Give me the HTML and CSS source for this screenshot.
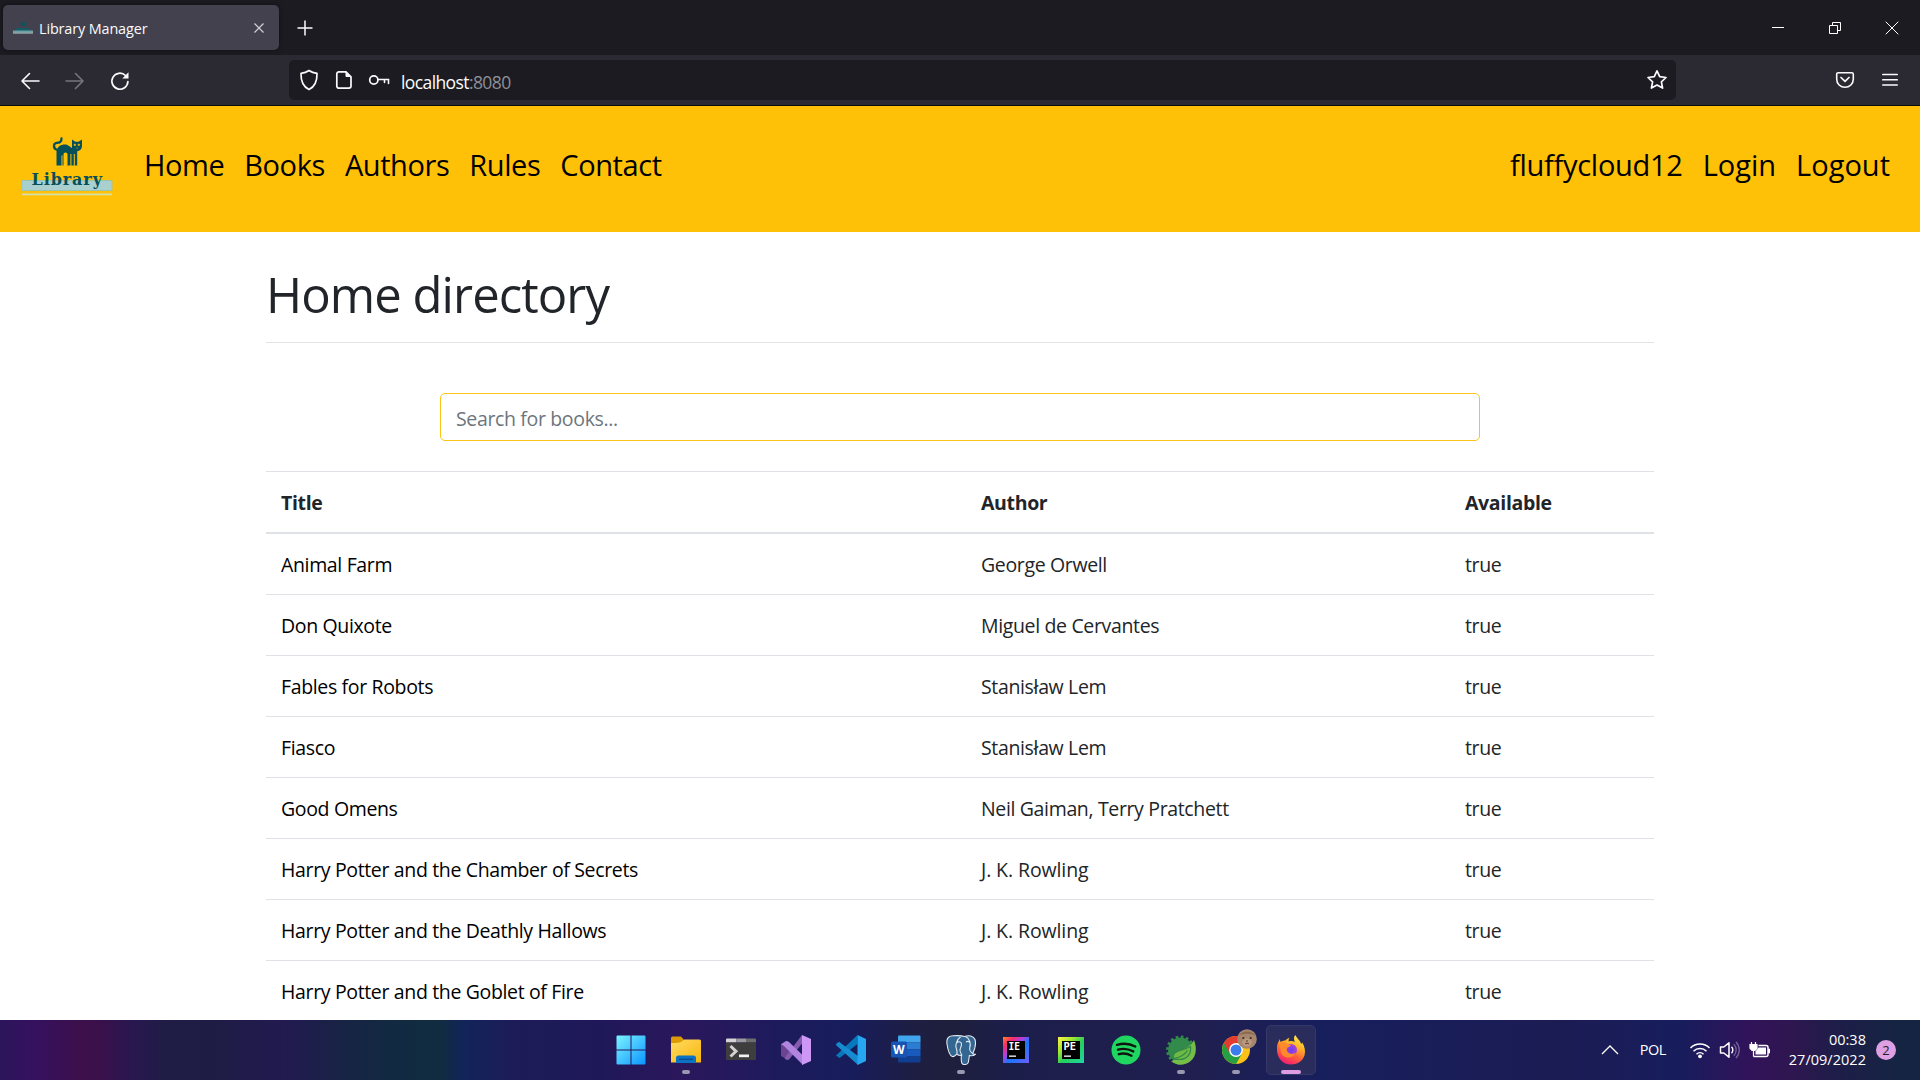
FILE: index.html
```html
<!DOCTYPE html>
<html lang="en">
<head>
<meta charset="utf-8">
<title>Library Manager</title>
<link rel="stylesheet" href="styles.css">
</head>
<body>
<div class="screen">
  <header class="tabstrip">
    <div class="tab">
      <svg class="favicon" width="20" height="14" viewBox="0 0 20 14"><path d="M7 1l2 1 2-1h2v4H8V3z" fill="#0b5560"/><path d="M3 7h14v3H3z" fill="#185862"/><path d="M0 9.500h20v2H0z" fill="#69a3a7"/><path d="M0 11.500h20v1H0z" fill="#b7d4d5"/></svg>
      <span class="tab-title">Library Manager</span>
      <svg class="tab-close" width="12" height="12" viewBox="0 0 12 12"><path d="M1.500 1.500l9 9m0-9l-9 9" stroke="#d0d0d6" stroke-width="1.200"/></svg>
    </div>
    <svg class="new-tab" width="16" height="16" viewBox="0 0 16 16"><path d="M8 .5v15M.5 8h15" stroke="#fbfbfe" stroke-width="1.500"/></svg>
    <div class="window-buttons">
      <svg width="14" height="14" viewBox="0 0 14 14"><path d="M1 6.500h12" stroke="#fff"/></svg>
      <svg width="14" height="14" viewBox="0 0 14 14"><path d="M1.500 4.500h8v8h-8zM4.500 4.500v-3h8v8h-3" fill="none" stroke="#fff"/></svg>
      <svg width="14" height="14" viewBox="0 0 14 14"><path d="M.7.7l12.600 12.600m0-12.600L.7 13.300" stroke="#fff"/></svg>
    </div>
  </header>

  <div class="toolbar">
    <div class="nav-buttons">
      <svg width="20" height="20" viewBox="0 0 20 20"><path d="M19 10H2M9.500 2.500L2 10l7.500 7.500" fill="none" stroke="#fbfbfe" stroke-width="1.600" stroke-linecap="round" stroke-linejoin="round"/></svg>
      <svg width="20" height="20" viewBox="0 0 20 20"><path d="M1 10h17M10.500 2.500L18 10l-7.500 7.500" fill="none" stroke="#76757d" stroke-width="1.600" stroke-linecap="round" stroke-linejoin="round"/></svg>
      <svg width="20" height="20" viewBox="0 0 20 20"><path d="M17.900 10.500A8 8 0 1 1 15.500 4.500" fill="none" stroke="#fbfbfe" stroke-width="1.700" stroke-linecap="round"/><path d="M18.500 1.200v6.300h-6.200z" fill="#fbfbfe"/></svg>
    </div>
    <div class="urlbar">
      <svg width="20" height="22" viewBox="0 0 20 22"><path d="M10 1.500c2.300 1.600 5 2.500 8 2.900C18.200 12 16 17.500 10 20.500 4 17.500 1.800 12 2 4.400c3-.4 5.700-1.300 8-2.900z" fill="none" stroke="#fbfbfe" stroke-width="1.700" stroke-linejoin="round"/></svg>
      <svg width="18" height="20" viewBox="0 0 18 20"><path d="M4 1.800h7l5 5V16a2.200 2.200 0 0 1-2.200 2.200H4A2.200 2.200 0 0 1 1.800 16V4A2.200 2.200 0 0 1 4 1.800z" fill="none" stroke="#fbfbfe" stroke-width="1.700"/><path d="M10.500 1.500v4.300c0 .8.500 1.300 1.300 1.300H16z" fill="#fbfbfe"/></svg>
      <svg class="key" width="22" height="12" viewBox="0 0 22 12"><circle cx="5.800" cy="6" r="4.100" fill="none" stroke="#fbfbfe" stroke-width="1.700"/><path d="M10 5.500h10.500v4M16.500 5.500v3" fill="none" stroke="#fbfbfe" stroke-width="1.600" stroke-linecap="round"/></svg>
      <span class="url">localhost<span class="port">:8080</span></span>
      <svg class="star" width="22" height="22" viewBox="0 0 22 22"><path d="M11 1.900l2.700 5.800 6.300.8-4.600 4.300 1.200 6.300L11 16l-5.600 3.100 1.200-6.300L2 8.500l6.300-.8z" fill="none" stroke="#fbfbfe" stroke-width="1.700" stroke-linejoin="round"/></svg>
    </div>
    <div class="toolbar-end">
      <svg width="20" height="18" viewBox="0 0 20 18"><path d="M3.300 1.700h13.400c1 0 1.600.7 1.600 1.600v5A8.300 8 0 0 1 1.700 8.300v-5c0-.9.600-1.600 1.600-1.600z" fill="none" stroke="#fbfbfe" stroke-width="1.600"/><path d="M6 6.500l4 3.900 4-3.900" fill="none" stroke="#fbfbfe" stroke-width="1.700" stroke-linecap="round" stroke-linejoin="round"/></svg>
      <svg width="16" height="14" viewBox="0 0 16 14"><path d="M.7 1.500h14.600M.7 6.800h14.600M.7 12h14.600" stroke="#fbfbfe" stroke-width="1.500" stroke-linecap="round"/></svg>
    </div>
  </div>

  <nav class="navbar">
    <svg class="logo" width="92" height="62" viewBox="0 0 92 62">
      <path d="M1 45.500h90v10H1z" fill="#a9cfcf" stroke="#8ec3bd" stroke-width=".8"/>
      <path d="M1 59.300h90" stroke="#d3dfae" stroke-width="1.800"/>
      <g transform="translate(0 1)">
      <path d="M40.500 2.500c.3 3.500-2.200 4.200-4.700 4.400-3.500.4-3.800 5-.5 6.600" fill="none" stroke="#07505a" stroke-width="2.300" stroke-linecap="round"/>
      <path d="M35.500 29.500V14.500C37 9.500 42 7.500 46.500 9l4.500 3V3.500l3.300 2.300h3.200L61 3.500v6c0 4.200-2.300 5.200-4.800 5.700v14.300h-2.400V18h-1v11.500h-2.400V18h-1v11.500h-2.900v-10.800c0-2.800-4-2.800-4 0v10.800h-1v-10h-1v10z" fill="#07505a"/>
      <path d="M53 8.200h1.600v1.200H53zm4 0h1.600v1.200H57zM55.100 12h1.800" fill="#ffc107" stroke="#ffc107" stroke-width=".5"/>
      </g>
      <text class="logo-text" x="10.500" y="49.500">Library</text>
    </svg>
    <div class="links">
      <a>Home</a><a>Books</a><a>Authors</a><a>Rules</a><a>Contact</a>
    </div>
    <div class="links account">
      <a class="user">fluffycloud12</a><a>Login</a><a>Logout</a>
    </div>
  </nav>

  <main class="container">
    <h1>Home directory</h1>
    <hr>
    <input class="search" type="text" placeholder="Search for books...">
    <table class="books">
      <thead><tr><th class="c-title">Title</th><th class="c-author">Author</th><th>Available</th></tr></thead>
      <tbody>
        <tr><td>Animal Farm</td><td>George Orwell</td><td>true</td></tr>
        <tr><td>Don Quixote</td><td>Miguel de Cervantes</td><td>true</td></tr>
        <tr><td>Fables for Robots</td><td>Stanisław Lem</td><td>true</td></tr>
        <tr><td>Fiasco</td><td>Stanisław Lem</td><td>true</td></tr>
        <tr><td>Good Omens</td><td>Neil Gaiman, Terry Pratchett</td><td>true</td></tr>
        <tr><td>Harry Potter and the Chamber of Secrets</td><td class="initials">J. K. Rowling</td><td>true</td></tr>
        <tr><td>Harry Potter and the Deathly Hallows</td><td class="initials">J. K. Rowling</td><td>true</td></tr>
        <tr><td>Harry Potter and the Goblet of Fire</td><td class="initials">J. K. Rowling</td><td>true</td></tr>
      </tbody>
    </table>
  </main>

  <footer class="taskbar">
    <div class="apps">
      <div class="app">
        <svg width="30" height="30" viewBox="0 0 30 30"><defs><linearGradient id="win" x1="0" y1="0" x2="1" y2="1"><stop offset="0" stop-color="#7df3ff"/><stop offset="1" stop-color="#0a95ff"/></linearGradient></defs><path d="M1.500.5H14.500V14.500H.5v-13a1 1 0 0 1 1-1zM15.500.5h13a1 1 0 0 1 1 1v13h-14zM.5 15.500h14v14h-13a1 1 0 0 1-1-1zM15.500 15.500h14v13a1 1 0 0 1-1 1h-13z" fill="url(#win)"/></svg>
      </div>
      <div class="app running">
        <svg width="30" height="30" viewBox="0 0 30 30"><defs><linearGradient id="fold" x1="0" y1="0" x2="1" y2="1"><stop offset="0" stop-color="#ffdc62"/><stop offset="1" stop-color="#f9b50d"/></linearGradient></defs><path d="M0 3a1.500 1.500 0 0 1 1.500-1.500H9c1 0 1.500.5 2.200 1.200L13 5v5H0z" fill="#dc9a04"/><path d="M0 8c4 0 9 0 11-1.500C12.500 5 13 4.500 14 4.500h14.500A1.500 1.500 0 0 1 30 6v21.500H0z" fill="url(#fold)"/><path d="M5 28v-5a2.500 2.500 0 0 1 2.500-2.500h15A2.500 2.500 0 0 1 25 23v5z" fill="#0b72c4"/><path d="M8 24.300h14" stroke="#064c92" stroke-width="1.300"/></svg>
      </div>
      <div class="app">
        <svg width="30" height="30" viewBox="0 0 30 30"><path d="M0 4.500A1 1 0 0 1 1 3.500h9.500v4H0z" fill="#d4d4d4"/><path d="M10.500 3.500h9.500v4h-9.500z" fill="#9b9b9b"/><path d="M20 3.500h9a1 1 0 0 1 1 1v3H20z" fill="#6d6d6d"/><path d="M0 7.500h30V24a1 1 0 0 1-1 1H1a1 1 0 0 1-1-1z" fill="#3e3e3e"/><path d="M4.500 11l5.500 5.300L4.500 21.500" fill="none" stroke="#d2d2d2" stroke-width="3"/><path d="M13 19.500h10v2.700H13z" fill="#f2f2f2"/></svg>
      </div>
      <div class="app">
        <svg width="30" height="30" viewBox="0 0 30 30"><path d="M0 9l3.500-2 5.500 4.500v7L3.500 23 0 21z" fill="#6c4391"/><path d="M3.500 23L21 0v8.500L8 24.500c-2 1-4 0-4.500-1.500z" fill="#855bb0"/><path d="M3.500 7c1.500-1.500 3-1 4.500 0L22 20.500V30L3 11c-1-.7-2-1.300-3-1.500z" fill="#b184df"/><path d="M21 0l9 4v22l-9 4z" fill="#cd98f5"/></svg>
      </div>
      <div class="app">
        <svg width="30" height="30" viewBox="0 0 30 30"><path d="M0 20.500L21.500 0v9L3.500 23z" fill="#0878bd"/><path d="M0 9l3-2.200L22 21v9L.5 10.500z" fill="#168bd0"/><path d="M21.500 0L30 4v22l-8.500 4z" fill="#27a7f2"/></svg>
      </div>
      <div class="app">
        <svg width="30" height="30" viewBox="0 0 30 30"><path d="M7 1.500A1 1 0 0 1 8 .5h20.500a1 1 0 0 1 1 1v6H7z" fill="#41a5ee"/><path d="M7 7.500h22.500v7H7z" fill="#2b7cd3"/><path d="M7 14.500h22.500v7H7z" fill="#185abd"/><path d="M7 21.500h22.500v5a1 1 0 0 1-1 1H8a1 1 0 0 1-1-1z" fill="#103f91"/><path d="M1.500 6.500h13A1.500 1.500 0 0 1 16 8v13a1.500 1.500 0 0 1-1.500 1.500h-13A1.500 1.500 0 0 1 0 21V8a1.500 1.500 0 0 1 1.500-1.500z" fill="#1854b4"/><text class="glyph-w" x="2" y="18.700">W</text></svg>
      </div>
      <div class="app running">
        <svg width="30" height="30" viewBox="0 0 30 30"><path d="M6.500.8C2 1 .3 4 1 9c.8 5.500 2.500 11.500 5.300 12.500 2 .5 3.200-1 4.200-2.200l2 .8 3 .4c-.5 2-.3 5 .3 7.500 1 2.300 6.200 2 6.600-1l1-6.500c2 .4 4.400.2 6-1.200-1.400.2-2.200 0-2.700-.6C29 14 30 8 29 4.500 27.500.5 22.500 0 18.500 1.500 14.500.2 10 .5 6.500.8z" fill="#336791" stroke="#e3e9ef" stroke-width="1.100"/><path d="M11 19c0-2 .3-4-1-6.500C9.300 9 11.500 4 14.500 2M19.500 1.500C24 3.500 25 9 23.800 12.500c-.6 2.500 0 4 3 6M11 7.500c2-1.500 4.500-.5 4.500 1.500s-1 4-1.500 5.500c-.5 2 1 4 2 6M20 7c1.500-1 3-.5 4 .5" fill="none" stroke="#e3e9ef" stroke-width="1.100"/></svg>
      </div>
      <div class="app">
        <svg width="26" height="26" viewBox="0 0 26 26"><defs><linearGradient id="ie" x1="0" y1="0" x2="1" y2="1"><stop offset="0" stop-color="#ff8a1e"/><stop offset=".2" stop-color="#fb2c68"/><stop offset=".4" stop-color="#b040e0"/><stop offset=".58" stop-color="#1677ff"/><stop offset="1" stop-color="#6f5df5"/></linearGradient></defs><path d="M0 0h26v26H0z" fill="url(#ie)"/><path d="M4 4h18v18H4z"/><path d="M6 18.500h7v1.300H6z" fill="#fff"/><text class="glyph-jb" x="5.500" y="13.300" textLength="11.500" lengthAdjust="spacingAndGlyphs">IE</text></svg>
      </div>
      <div class="app">
        <svg width="26" height="26" viewBox="0 0 26 26"><defs><linearGradient id="pe" x1="0" y1="0" x2="1" y2="1"><stop offset="0" stop-color="#fff24a"/><stop offset=".3" stop-color="#a4e82f"/><stop offset=".55" stop-color="#25ce5c"/><stop offset="1" stop-color="#20d6a3"/></linearGradient></defs><path d="M0 0h26v26H0z" fill="url(#pe)"/><path d="M4 4h18v18H4z"/><path d="M6 18.500h7v1.300H6z" fill="#fff"/><text class="glyph-jb" x="5.500" y="13.300" textLength="12.500" lengthAdjust="spacingAndGlyphs">PE</text></svg>
      </div>
      <div class="app">
        <svg width="30" height="30" viewBox="0 0 30 30"><circle cx="15" cy="15" r="14.500" fill="#1fd760"/><path d="M6 9.800c6-1.700 13-1.200 18.300 1.700M7 14.700c5-1.500 10.500-.8 15.300 1.700M7.800 19.200c4.400-1.200 8.800-.6 12.700 1.500" fill="none" stroke="#10150f" stroke-linecap="round" stroke-width="2.400"/></svg>
      </div>
      <div class="app running">
        <svg width="30" height="30" viewBox="0 0 30 30"><circle cx="14.500" cy="15" r="12.500" fill="#328a4b"/><circle cx="14.500" cy="15" r="13.200" fill="none" stroke="#328a4b" stroke-width="2.600" stroke-dasharray="2.600 2.580"/><path d="M28 5c3.500 9 2 17-4 21.500-6 4.500-14 4-19-.5 6-1 4-7 10-10.500C20 12.500 25 11 28 5z" fill="#74bd46"/><path d="M7.500 24c-2-9 9-8 17-12.500 1 8-4 13-11 13-2.500 0-4-.2-6-.5z" fill="#6cba44" stroke="#318649" stroke-width="1.200"/><path d="M8 23.500c6-1 10.500-3.500 13.500-8" fill="none" stroke="#318649" stroke-width="1.300"/></svg>
      </div>
      <div class="app running">
        <svg width="42" height="42" viewBox="0 0 42 42"><g transform="translate(7 7)"><circle cx="14" cy="14" r="14" fill="#fbc116"/><path d="M14 14L1.900 7A14 14 0 0 0 14 28l6-10.500z" fill="#269f42"/><path d="M14 7h12.200A14 14 0 0 0 1.900 7l6 10.500z" fill="#e33b2e"/><circle cx="14" cy="14" r="6.900" fill="#fff"/><circle cx="14" cy="14" r="5.500" fill="#3b7ded"/></g><circle cx="32" cy="10" r="9.800" fill="#a7866d"/><path d="M23 7c4-6 14-6 18 0-5-3-13-3-18 0z" fill="#8c6a50"/><ellipse cx="32" cy="13.500" rx="5" ry="4" fill="#b8987f"/><circle cx="28.300" cy="9" r="1.100" fill="#3f2d26"/><circle cx="35.700" cy="9" r="1.100" fill="#3f2d26"/><path d="M30 15c1.300-1 2.700-1 4 0M31 12h2" fill="none" stroke="#5b3e31"/></svg>
      </div>
      <div class="app active">
        <svg width="30" height="30" viewBox="0 0 30 30"><defs><linearGradient id="ff" x1=".75" y1="0" x2=".3" y2="1"><stop offset="0" stop-color="#fff04a"/><stop offset=".35" stop-color="#ffb127"/><stop offset=".65" stop-color="#ff6038"/><stop offset="1" stop-color="#f0187a"/></linearGradient><radialGradient id="globe"><stop offset="0" stop-color="#6f3df0"/><stop offset="1" stop-color="#a844d8"/></radialGradient></defs><path d="M1 12c.3-3 1.300-5.500 3-8 0 1.500.2 2.300.7 3C6 6 7.500 5.500 9.500 5.500c1.200-1.300 2-2 4-2.700-1 1.500-1 2.500-.8 3.700 2-.7 4.300-.5 6.300.5-1.500-2.500-1.300-5 .3-7C20.500 3 24 5 25.200 9l1-1.500c2.500 4 3.500 8.500 2.300 13C26.500 26.500 21 29.500 15 29.500 7 29.500 0 23.500 1 12z" fill="url(#ff)"/><circle cx="15" cy="15" r="6" fill="url(#globe)"/><path d="M3 9c4-2 7-2 9 .5l3 .8c-1 2-4 1.500-4.300 4 0 4 5 6 9 3.500-2 5-9 6.500-13 2.500C4 17.500 5 12 3 9z" fill="#ff8a2c"/></svg>
      </div>
    </div>
    <div class="tray">
      <svg class="t-chev" width="18" height="12" viewBox="0 0 18 12"><path d="M1 10l8-8 8 8" fill="none" stroke="#fff" stroke-width="1.300"/></svg>
      <span class="t-lang">POL</span>
      <svg class="t-wifi" width="22" height="18" viewBox="0 0 22 18"><path d="M1.500 7a13.400 13.400 0 0 1 19 0M4.500 10.200a9.200 9.200 0 0 1 13 0M7.500 13.200a5 5 0 0 1 7 0" fill="none" stroke="#fff" stroke-width="1.500"/><circle cx="11" cy="15.300" r="1.900" fill="#fff"/></svg>
      <svg class="t-vol" width="22" height="20" viewBox="0 0 22 20"><path d="M1.500 7h3.300L10 2.800v14.400L4.800 13H1.500z" fill="none" stroke="#fff" stroke-width="1.500" stroke-linejoin="round"/><path d="M12.500 6.800a4.500 4.500 0 0 1 0 6.400" fill="none" stroke="#fff" stroke-width="1.400"/><path d="M14.800 4.300a8 8 0 0 1 0 11.400M17 2a11.500 11.500 0 0 1 0 16" fill="none" stroke="#77619a" stroke-width="1.300"/></svg>
      <svg class="t-bat" width="22" height="18" viewBox="0 0 22 18"><path d="M2.500 1v3M6.500 1v3M1 3.700h7v3.500L6 9.500H3L1 7.200zM4.500 9v6.500" fill="#fff" stroke="#fff" stroke-width="1.200"/><path d="M9.500 4.500H17a2 2 0 0 1 2 2v7a2 2 0 0 1-2 2H4.500" fill="none" stroke="#fff" stroke-width="1.500"/><path d="M9.500 6.500H17v7H6.500v-3z" fill="#fff"/><path d="M19.500 8h1v4h-1z" fill="#fff" stroke="#fff"/></svg>
      <div class="clock"><span>00:38</span><span>27/09/2022</span></div>
      <span class="badge">2</span>
    </div>
  </footer>
</div>
</body>
</html>
```
FILE: styles.css
```css
* { box-sizing: border-box; }

body {
  margin: 0;
  font-family: "Open Sans", "Noto Sans", sans-serif;
  font-size: 19.5px;
  line-height: 30px;
  color: #212529;
  background: #fff;
}

svg { display: block; flex: none; }

.screen {
  display: flex;
  flex-direction: column;
  width: 1920px;
  height: 1080px;
  overflow: hidden;
}

/* Browser tabs */
.tabstrip {
  display: flex;
  flex: none;
  align-items: center;
  height: 55px;
  padding: 0 21px 0 3px;
  background: #1c1b22;
}

.tab {
  display: flex;
  align-items: center;
  width: 276px;
  height: 45px;
  padding: 0 14px 0 10px;
  border-radius: 5px;
  background: #42414d;
  box-shadow: 0 0 4px rgba(0, 0, 0, .5);
}

.tab-title {
  margin-left: 6px;
  padding-top: 2px;
  font-size: 14.4px;
  letter-spacing: -.12px;
  color: #fbfbfe;
}

.tab-close { margin-left: auto; }
.new-tab { margin-left: 18px; }

.window-buttons {
  display: flex;
  gap: 43px;
  margin-left: auto;
}

/* Browser toolbar */
.toolbar {
  display: flex;
  flex: none;
  align-items: center;
  height: 51px;
  padding-right: 22px;
  background: #2b2a33;
  border-bottom: 1px solid #0c0c0d;
}

.nav-buttons {
  display: flex;
  gap: 25px;
  width: 289px;
  padding: 1px 0 0 20px;
}

.urlbar {
  display: flex;
  align-items: center;
  width: 1387px;
  height: 40px;
  padding: 0 8px 0 10px;
  border-radius: 5px;
  background: #1c1b22;
}

.urlbar svg + svg { margin-left: 16px; }
.urlbar .key { margin-left: 15px; }

.url {
  margin-left: 11px;
  padding-top: 3px;
  font-size: 17.5px;
  letter-spacing: -.6px;
  color: #fbfbfe;
}

.port { color: #8f8f97; }
.star { margin-left: auto; }

.toolbar-end {
  display: flex;
  align-items: center;
  gap: 27px;
  margin-left: auto;
}

/* Site navigation */
.navbar {
  display: flex;
  flex: none;
  align-items: flex-start;
  height: 126px;
  padding: 29px 20px 0 21px;
  background: #ffc107;
}

.logo-text {
  font: bold 16px "DejaVu Serif", serif;
  letter-spacing: .9px;
  fill: #07505a;
}

.links {
  display: flex;
  margin-left: 21px;
  padding-top: 7px;
  font-size: 29px;
  line-height: 45px;
  letter-spacing: -.42px;
  color: #000;
}

.links a { padding: 0 10px; }
.account { margin-left: auto; letter-spacing: 0; }
.user { letter-spacing: -.28px; }

/* Page content */
.container {
  flex: 1;
  min-height: 0;
  width: 1388px;
  margin-left: 266px;
  overflow: hidden;
}

h1 {
  margin: 32px 0 18px;
  font-size: 49px;
  font-weight: 400;
  line-height: 60px;
  letter-spacing: -.93px;
}

hr {
  height: 1px;
  margin: 0 0 50px;
  border: 0;
  background: #e3e4e5;
}

.search {
  display: block;
  width: 1040px;
  height: 48px;
  margin: 0 auto 30px;
  padding: 2px 15px 0;
  border: 1px solid #fcc419;
  border-radius: 5px;
  font: inherit;
  letter-spacing: -.35px;
  background: #fff;
}

.search::placeholder { color: #6c757d; opacity: 1; }

.books {
  width: 100%;
  table-layout: fixed;
  border-spacing: 0;
  letter-spacing: -.35px;
}

.books th,
.books td {
  height: 61px;
  padding: 1px 15px 0;
  border-top: 1px solid #dee2e6;
  text-align: left;
}

.books th { height: 63px; border-bottom: 2px solid #dee2e6; }
.books tbody tr:first-child td { height: 60px; border-top: 0; }
.books td:first-child { color: #000; }
.books .initials { letter-spacing: -.1px; }
.c-title { width: 700px; }
.c-author { width: 484px; }

/* Taskbar */
.taskbar {
  display: flex;
  flex: none;
  align-items: stretch;
  height: 60px;
  padding: 0 24px 0 603px;
  color: #fff;
  background: linear-gradient(90deg, #2c155a 0, #35115f 35px, #3d0f4b 80px, #3a104a 100px, #2a1750 130px, #1f1c46 165px, #1e1c44 210px, #221a50 285px, #172444 345px, #112a41 400px, #112c40 440px, #12245a 465px, #1c1c58 510px, #1f1858 600px, #2b175c 680px, #1d1b5c 780px, #171d5c 850px, #1e1e44 910px, #1e1f3c 950px, #1c1e4a 1010px, #201f50 1200px, #171f5c 1320px, #1c1c54 1560px, #171d5c 1680px, #31135a 1750px, #2f1650 1790px, #1d1e48 1840px, #152442 1900px);
}

.apps { display: flex; }

.app {
  position: relative;
  display: flex;
  align-items: center;
  justify-content: center;
  width: 55px;
}

.app.running::after,
.app.active::after {
  content: "";
  position: absolute;
  bottom: 6px;
  left: 50%;
  width: 8px;
  height: 4px;
  margin-left: -4px;
  border-radius: 2px;
  background: #9a98b0;
}

.app.active::after {
  width: 20px;
  margin-left: -10px;
  background: #dd9ee3;
}

.app.active {
  width: 50px;
  height: 50px;
  margin: 5px 2px 0 3px;
  border: 1px solid #36386a;
  border-radius: 5px;
  background: #2a2c5c;
}

.app.active::after { bottom: 0; }

.glyph-w { font: bold 12px "Open Sans", sans-serif; fill: #fff; }
.glyph-jb { font: bold 10.500px "DejaVu Sans Mono", monospace; fill: #fff; }

.tray {
  display: flex;
  align-items: center;
  margin-left: auto;
  font-size: 14.5px;
}

.t-lang { margin-left: 21px; letter-spacing: -.4px; }
.t-wifi { margin-left: 23px; }
.t-vol { margin-left: 8px; }
.t-bat { margin-left: 8px; }

.clock {
  display: flex;
  flex-direction: column;
  align-items: flex-end;
  width: 95px;
  line-height: 20px;
  letter-spacing: .03px;
}

.badge {
  width: 20px;
  height: 20px;
  margin-left: 10px;
  border-radius: 50%;
  background: #dfa0e3;
  color: #222;
  font-size: 13px;
  line-height: 20px;
  text-align: center;
}
```
